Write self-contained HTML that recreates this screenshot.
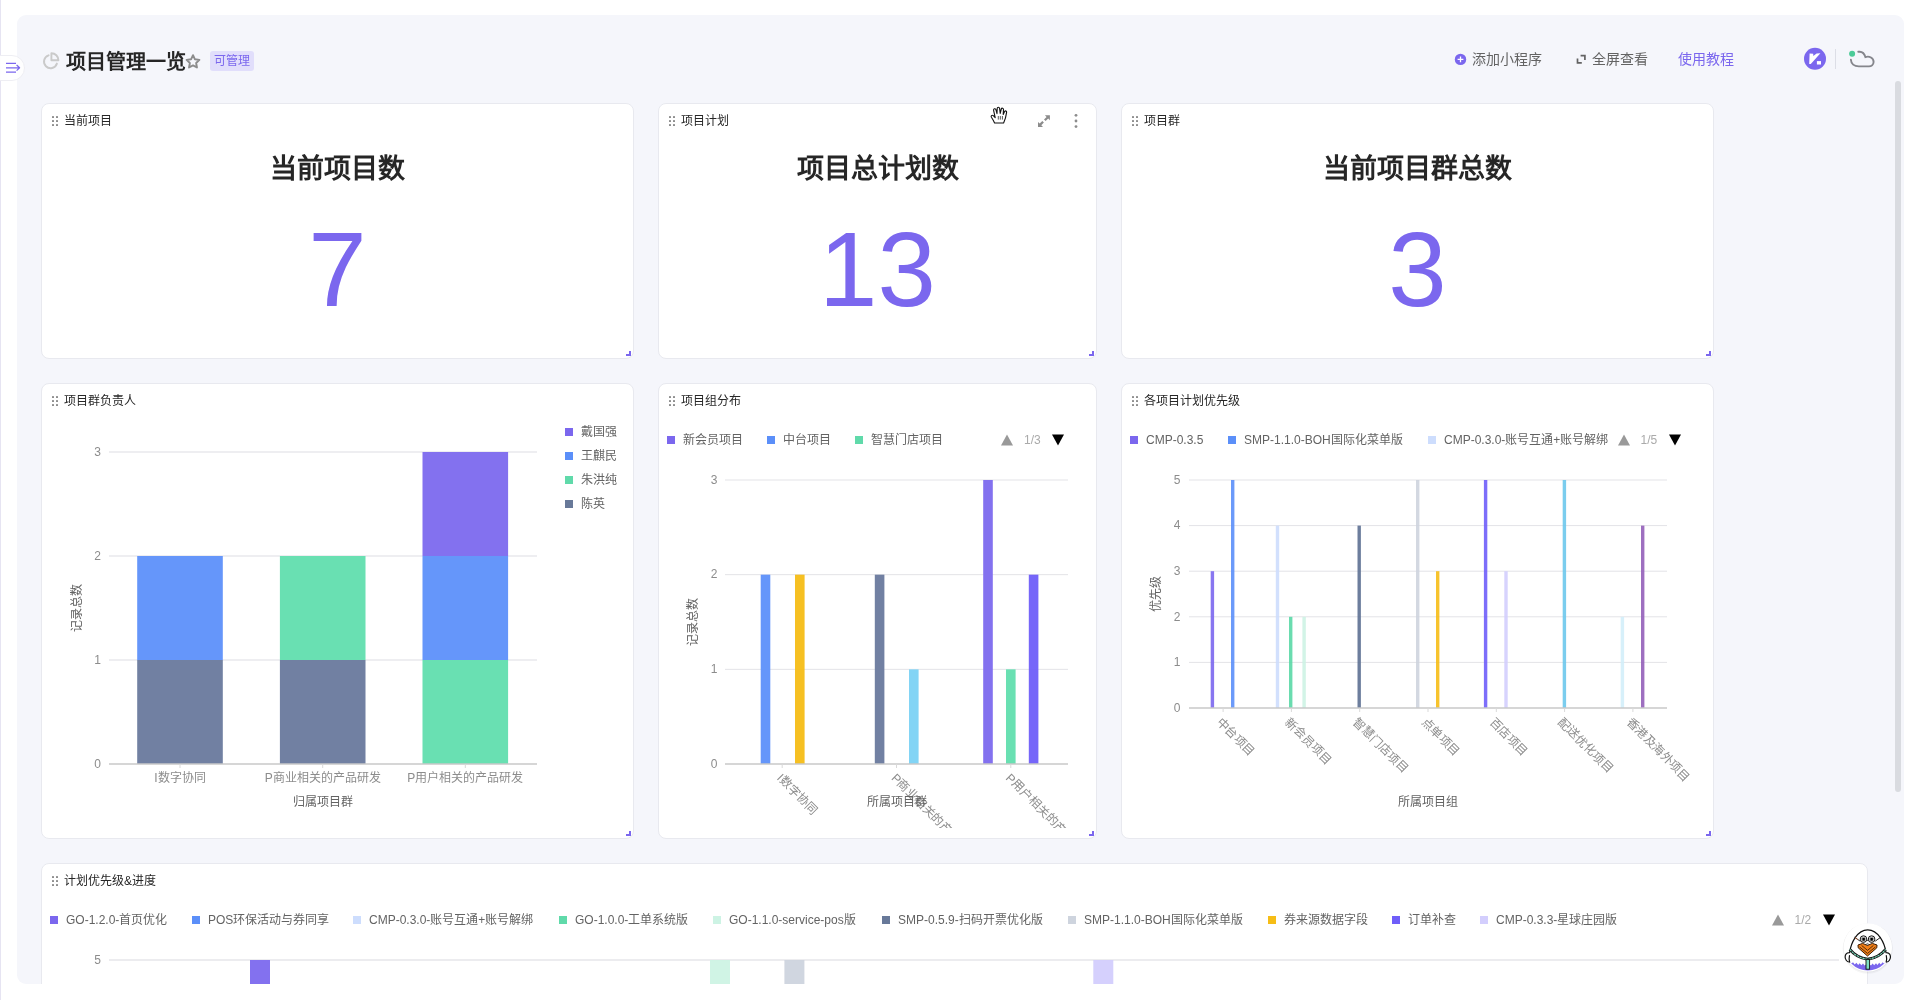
<!DOCTYPE html>
<html lang="zh-CN">
<head>
<meta charset="utf-8">
<title>项目管理一览</title>
<style>
*{box-sizing:border-box;margin:0;padding:0}
html,body{width:1920px;height:1000px;overflow:hidden;background:#fff;font-family:"Liberation Sans",sans-serif;color:#262626}
.abs{position:absolute}
#ov{will-change:opacity;opacity:.999}
.ct,.big,.htx{will-change:transform}
#strip{position:absolute;left:0;top:0;width:1px;height:1000px;background:#e6e4f2}
#main{position:absolute;left:17px;top:15px;width:1887px;height:969px;background:#f5f6fb;border-radius:9px;overflow:hidden}
#toggle{position:absolute;left:-6px;top:55px;width:30px;height:26px;border-radius:13px;background:#fff;box-shadow:0 1px 4px rgba(0,0,0,.10)}
.card{position:absolute;background:#fff;border:1px solid #e8e9ef;border-radius:8px;overflow:hidden}
.ct{position:absolute;left:22px;top:9px;font-size:12px;line-height:16px;color:#262626;white-space:nowrap}
.drag{position:absolute;left:10px;top:12px;width:7px;height:11px}
.rz{position:absolute;right:1px;bottom:1px;width:5px;height:5px;border-right:2px solid #7b67ee;border-bottom:2px solid #7b67ee}
.big{position:absolute;left:0;width:100%;text-align:center;white-space:nowrap}
.h1{top:45px;font-size:27px;line-height:40px;font-weight:bold;color:#262626}
.num{top:106px;font-size:105px;line-height:120px;color:#7b67ee}
svg text{font-family:"Liberation Sans",sans-serif}
.lg{position:absolute;font-size:12px;line-height:16px;color:#636363;white-space:nowrap}
.sq{position:absolute;width:8px;height:8px}
</style>
</head>
<body>
<div id="strip"></div>
<div id="main">
  <!-- header -->
  <div class="abs htx" style="left:49px;top:34px;font-size:20px;line-height:26px;font-weight:bold;color:#262626;white-space:nowrap">项目管理一览</div>
  <div class="abs" style="left:193px;top:36px;width:44px;height:20px;border-radius:3px;background:#e1defb"></div><div class="abs htx" style="left:193px;top:36px;width:44px;height:20px;color:#7b67ee;font-size:12px;line-height:20px;text-align:center">可管理</div>
  <div class="abs htx" style="left:1455px;top:35px;font-size:14px;line-height:18px;color:#636363;white-space:nowrap">添加小程序</div>
  <div class="abs htx" style="left:1575px;top:35px;font-size:14px;line-height:18px;color:#636363;white-space:nowrap">全屏查看</div>
  <div class="abs htx" style="left:1661px;top:35px;font-size:14px;line-height:18px;color:#7b67ee;white-space:nowrap">使用教程</div>

  <!-- row 1 -->
  <div class="card" style="left:24px;top:88px;width:593px;height:256px">
    <div class="ct">当前项目</div>
    <div class="big h1">当前项目数</div>
    <div class="big num">7</div>
  </div>
  <div class="card" style="left:641px;top:88px;width:439px;height:256px">
    <div class="ct">项目计划</div>
    <div class="big h1">项目总计划数</div>
    <div class="big num">13</div>
  </div>
  <div class="card" style="left:1104px;top:88px;width:593px;height:256px">
    <div class="ct">项目群</div>
    <div class="big h1">当前项目群总数</div>
    <div class="big num">3</div>
  </div>

  <!-- row 2 -->
  <div class="card" id="c4" style="left:24px;top:368px;width:593px;height:456px">
    <div class="ct">项目群负责人</div>
  </div>
  <div class="card" id="c5" style="left:641px;top:368px;width:439px;height:456px">
    <div class="ct">项目组分布</div>
  </div>
  <div class="card" id="c6" style="left:1104px;top:368px;width:593px;height:456px">
    <div class="ct">各项目计划优先级</div>
  </div>

  <!-- row 3 -->
  <div class="card" id="c7" style="left:24px;top:848px;width:1827px;height:300px">
    <div class="ct">计划优先级&amp;进度</div>
  </div>
</div>
<svg id="ov" style="position:absolute;left:0;top:0" width="1920" height="1000" viewBox="0 0 1920 1000">
<defs><clipPath id="mainclip"><rect x="17" y="15" width="1887" height="969" rx="9"/></clipPath></defs>
<g clip-path="url(#mainclip)">
<g id="ch1">
<line x1="109" y1="452" x2="537" y2="452" stroke="#e8e8ec" stroke-width="1.5"/>
<text x="101" y="456.3" font-size="12" text-anchor="end" fill="#8c8c8c" >3</text>
<line x1="109" y1="556" x2="537" y2="556" stroke="#e8e8ec" stroke-width="1.5"/>
<text x="101" y="560.3" font-size="12" text-anchor="end" fill="#8c8c8c" >2</text>
<line x1="109" y1="660" x2="537" y2="660" stroke="#e8e8ec" stroke-width="1.5"/>
<text x="101" y="664.3" font-size="12" text-anchor="end" fill="#8c8c8c" >1</text>
<text x="101" y="768.3" font-size="12" text-anchor="end" fill="#8c8c8c" >0</text>
<rect x="137.2" y="660" width="85.6" height="104" fill="#7180A2" fill-opacity="1"/>
<rect x="137.2" y="556" width="85.6" height="104" fill="#6596FA" fill-opacity="1"/>
<rect x="279.9" y="660" width="85.6" height="104" fill="#7180A2" fill-opacity="1"/>
<rect x="279.9" y="556" width="85.6" height="104" fill="#69E0B2" fill-opacity="1"/>
<rect x="422.5" y="660" width="85.6" height="104" fill="#69E0B2" fill-opacity="1"/>
<rect x="422.5" y="556" width="85.6" height="104" fill="#6596FA" fill-opacity="1"/>
<rect x="422.5" y="452" width="85.6" height="104" fill="#8371EF" fill-opacity="1"/>
<line x1="109" y1="764" x2="537" y2="764" stroke="#c9c9c9" stroke-width="1.5"/>
<line x1="180" y1="764" x2="180" y2="768" stroke="#d9d9d9" stroke-width="1"/>
<line x1="322.7" y1="764" x2="322.7" y2="768" stroke="#d9d9d9" stroke-width="1"/>
<line x1="465.3" y1="764" x2="465.3" y2="768" stroke="#d9d9d9" stroke-width="1"/>
<text x="180" y="782" font-size="12" text-anchor="middle" fill="#8c8c8c" >I数字协同</text>
<text x="322.7" y="782" font-size="12" text-anchor="middle" fill="#8c8c8c" >P商业相关的产品研发</text>
<text x="465.3" y="782" font-size="12" text-anchor="middle" fill="#8c8c8c" >P用户相关的产品研发</text>
<text x="322.5" y="806" font-size="12" text-anchor="middle" fill="#636363" >归属项目群</text>
<text transform="translate(80.5,608) rotate(-90)" font-size="12" text-anchor="middle" fill="#636363">记录总数</text>
<rect x="565" y="428" width="8" height="8" fill="#7B67EE"/>
<text x="581" y="435.7" font-size="12" text-anchor="start" fill="#636363" >戴国强</text>
<rect x="565" y="452" width="8" height="8" fill="#5B8FF9"/>
<text x="581" y="459.7" font-size="12" text-anchor="start" fill="#636363" >王麒民</text>
<rect x="565" y="476" width="8" height="8" fill="#60DAAA"/>
<text x="581" y="483.7" font-size="12" text-anchor="start" fill="#636363" >朱洪纯</text>
<rect x="565" y="500" width="8" height="8" fill="#687999"/>
<text x="581" y="507.7" font-size="12" text-anchor="start" fill="#636363" >陈英</text>
</g>
<defs><clipPath id="clip2"><rect x="659" y="384" width="437" height="444"/></clipPath><clipPath id="clip3"><rect x="1122" y="384" width="591" height="444"/></clipPath></defs>
<g id="ch2" clip-path="url(#clip2)">
<line x1="725" y1="480" x2="1068" y2="480" stroke="#e3e3e7" stroke-width="1"/>
<text x="717.5" y="484" font-size="12" text-anchor="end" fill="#8c8c8c" >3</text>
<line x1="725" y1="574.67" x2="1068" y2="574.67" stroke="#e3e3e7" stroke-width="1"/>
<text x="717.5" y="578" font-size="12" text-anchor="end" fill="#8c8c8c" >2</text>
<line x1="725" y1="669.33" x2="1068" y2="669.33" stroke="#e3e3e7" stroke-width="1"/>
<text x="717.5" y="673" font-size="12" text-anchor="end" fill="#8c8c8c" >1</text>
<text x="717.5" y="768.3" font-size="12" text-anchor="end" fill="#8c8c8c" >0</text>
<rect x="760.7" y="574.66" width="9.6" height="189.34" fill="#6596FA" fill-opacity="1"/>
<rect x="795" y="574.66" width="9.6" height="189.34" fill="#F6BD16" fill-opacity="0.95"/>
<rect x="874.8" y="574.66" width="9.6" height="189.34" fill="#7180A2" fill-opacity="1"/>
<rect x="909" y="669.33" width="9.6" height="94.67" fill="#82D4F5" fill-opacity="1"/>
<rect x="983.2" y="479.99" width="9.6" height="284.01" fill="#8371EF" fill-opacity="1"/>
<rect x="1006" y="669.33" width="9.6" height="94.67" fill="#69E0B2" fill-opacity="1"/>
<rect x="1028.8" y="574.66" width="9.6" height="189.34" fill="#6F5EF9" fill-opacity="0.95"/>
<line x1="725" y1="764" x2="1068" y2="764" stroke="#c9c9c9" stroke-width="1.5"/>
<line x1="782.2" y1="764" x2="782.2" y2="768" stroke="#d9d9d9" stroke-width="1"/>
<line x1="896.5" y1="764" x2="896.5" y2="768" stroke="#d9d9d9" stroke-width="1"/>
<line x1="1010.8" y1="764" x2="1010.8" y2="768" stroke="#d9d9d9" stroke-width="1"/>
<text transform="translate(779.2,776.0) rotate(45)" font-size="12" fill="#8c8c8c" dominant-baseline="central">I数字协同</text>
<text transform="translate(893.5,776.0) rotate(45)" font-size="12" fill="#8c8c8c" dominant-baseline="central">P商业相关的产品研发</text>
<text transform="translate(1007.8,776.0) rotate(45)" font-size="12" fill="#8c8c8c" dominant-baseline="central">P用户相关的产品研发</text>
<text x="896.5" y="806" font-size="12" text-anchor="middle" fill="#636363" >所属项目群</text>
<text transform="translate(697,622) rotate(-90)" font-size="12" text-anchor="middle" fill="#636363">记录总数</text>
<rect x="667" y="436" width="8" height="8" fill="#7B67EE"/>
<text x="683" y="443.6" font-size="12" text-anchor="start" fill="#636363" >新会员项目</text>
<rect x="767" y="436" width="8" height="8" fill="#5B8FF9"/>
<text x="783" y="443.6" font-size="12" text-anchor="start" fill="#636363" >中台项目</text>
<rect x="855" y="436" width="8" height="8" fill="#60DAAA"/>
<text x="871" y="443.6" font-size="12" text-anchor="start" fill="#636363" >智慧门店项目</text>
<path d="M1001,445.5 L1013,445.5 L1007,434.5 Z" fill="#999999"/>
<text x="1024" y="443.6" font-size="12" text-anchor="start" fill="#aaaaaa" >1/3</text>
<path d="M1052,434.5 L1064,434.5 L1058,445.5 Z" fill="#000"/>
</g>
<g id="ch3" clip-path="url(#clip3)">
<line x1="1189" y1="480.0" x2="1667" y2="480.0" stroke="#e3e3e7" stroke-width="1"/>
<text x="1180.5" y="483.7" font-size="12" text-anchor="end" fill="#8c8c8c" >5</text>
<line x1="1189" y1="525.6" x2="1667" y2="525.6" stroke="#e3e3e7" stroke-width="1"/>
<text x="1180.5" y="529.3000000000001" font-size="12" text-anchor="end" fill="#8c8c8c" >4</text>
<line x1="1189" y1="571.2" x2="1667" y2="571.2" stroke="#e3e3e7" stroke-width="1"/>
<text x="1180.5" y="574.9000000000001" font-size="12" text-anchor="end" fill="#8c8c8c" >3</text>
<line x1="1189" y1="616.8" x2="1667" y2="616.8" stroke="#e3e3e7" stroke-width="1"/>
<text x="1180.5" y="620.5" font-size="12" text-anchor="end" fill="#8c8c8c" >2</text>
<line x1="1189" y1="662.4" x2="1667" y2="662.4" stroke="#e3e3e7" stroke-width="1"/>
<text x="1180.5" y="666.1" font-size="12" text-anchor="end" fill="#8c8c8c" >1</text>
<text x="1180.5" y="711.7" font-size="12" text-anchor="end" fill="#8c8c8c" >0</text>
<rect x="1210.7" y="571.2" width="3.4" height="136.8" fill="#7B67EE" fill-opacity=".9"/>
<rect x="1231" y="480.0" width="3.4" height="228.0" fill="#5B8FF9" fill-opacity=".9"/>
<rect x="1275.8" y="525.6" width="3.4" height="182.4" fill="#CDDDFD" fill-opacity=".9"/>
<rect x="1289" y="616.8" width="3.4" height="91.2" fill="#5AD8A6" fill-opacity=".9"/>
<rect x="1302.4" y="616.8" width="3.4" height="91.2" fill="#CDF3E4" fill-opacity=".9"/>
<rect x="1357.5" y="525.6" width="3.4" height="182.4" fill="#5D7092" fill-opacity=".9"/>
<rect x="1416" y="480.0" width="3.4" height="228.0" fill="#CED4DE" fill-opacity=".9"/>
<rect x="1436" y="571.2" width="3.4" height="136.8" fill="#F6BD16" fill-opacity=".9"/>
<rect x="1483.9" y="480.0" width="3.4" height="228.0" fill="#6F5EF9" fill-opacity=".9"/>
<rect x="1504.3" y="571.2" width="3.4" height="136.8" fill="#D3CEFD" fill-opacity=".9"/>
<rect x="1562.7" y="480.0" width="3.4" height="228.0" fill="#6DC8EC" fill-opacity=".9"/>
<rect x="1620.7" y="616.8" width="3.4" height="91.2" fill="#D3EEF9" fill-opacity=".9"/>
<rect x="1641" y="525.6" width="3.4" height="182.4" fill="#945FB9" fill-opacity=".9"/>
<line x1="1189" y1="708" x2="1667" y2="708" stroke="#c9c9c9" stroke-width="1.5"/>
<line x1="1223.1" y1="708" x2="1223.1" y2="712" stroke="#d9d9d9" stroke-width="1"/>
<text transform="translate(1218.6,720) rotate(45)" font-size="12" fill="#8c8c8c" dominant-baseline="central">中台项目</text>
<line x1="1291.4" y1="708" x2="1291.4" y2="712" stroke="#d9d9d9" stroke-width="1"/>
<text transform="translate(1286.9,720) rotate(45)" font-size="12" fill="#8c8c8c" dominant-baseline="central">新会员项目</text>
<line x1="1359.7" y1="708" x2="1359.7" y2="712" stroke="#d9d9d9" stroke-width="1"/>
<text transform="translate(1355.2,720) rotate(45)" font-size="12" fill="#8c8c8c" dominant-baseline="central">智慧门店项目</text>
<line x1="1428.0" y1="708" x2="1428.0" y2="712" stroke="#d9d9d9" stroke-width="1"/>
<text transform="translate(1423.5,720) rotate(45)" font-size="12" fill="#8c8c8c" dominant-baseline="central">点单项目</text>
<line x1="1496.3" y1="708" x2="1496.3" y2="712" stroke="#d9d9d9" stroke-width="1"/>
<text transform="translate(1491.8,720) rotate(45)" font-size="12" fill="#8c8c8c" dominant-baseline="central">百店项目</text>
<line x1="1564.6" y1="708" x2="1564.6" y2="712" stroke="#d9d9d9" stroke-width="1"/>
<text transform="translate(1560.1,720) rotate(45)" font-size="12" fill="#8c8c8c" dominant-baseline="central">配送优化项目</text>
<line x1="1632.9" y1="708" x2="1632.9" y2="712" stroke="#d9d9d9" stroke-width="1"/>
<text transform="translate(1628.4,720) rotate(45)" font-size="12" fill="#8c8c8c" dominant-baseline="central">香港及海外项目</text>
<text x="1427.5" y="806" font-size="12" text-anchor="middle" fill="#636363" >所属项目组</text>
<text transform="translate(1160,594) rotate(-90)" font-size="12" text-anchor="middle" fill="#636363">优先级</text>
<rect x="1130" y="436" width="8" height="8" fill="#7B67EE"/>
<text x="1146" y="443.6" font-size="12" text-anchor="start" fill="#636363" >CMP-0.3.5</text>
<rect x="1228" y="436" width="8" height="8" fill="#5B8FF9"/>
<text x="1244" y="443.6" font-size="12" text-anchor="start" fill="#636363" >SMP-1.1.0-BOH国际化菜单版</text>
<rect x="1428" y="436" width="8" height="8" fill="#CDDDFD"/>
<text x="1444" y="443.6" font-size="12" text-anchor="start" fill="#636363" >CMP-0.3.0-账号互通+账号解绑</text>
<path d="M1618,445.5 L1630,445.5 L1624,434.5 Z" fill="#999999"/>
<text x="1640.5" y="443.6" font-size="12" text-anchor="start" fill="#aaaaaa" >1/5</text>
<path d="M1669,434.5 L1681,434.5 L1675,445.5 Z" fill="#000"/>
</g>
<g id="ch4">
<line x1="109" y1="960" x2="1839" y2="960" stroke="#e6e6ea" stroke-width="1.4"/>
<text x="101" y="964.3" font-size="12" text-anchor="end" fill="#8c8c8c" >5</text>
<rect x="250" y="960" width="20" height="40" fill="#8371EF" fill-opacity="1"/>
<rect x="710" y="960" width="20" height="40" fill="#CDF3E4" fill-opacity="0.95"/>
<rect x="784.4" y="960" width="20" height="40" fill="#CED4DE" fill-opacity="0.95"/>
<rect x="1093.3" y="960" width="20" height="40" fill="#D3CEFD" fill-opacity="0.95"/>
<rect x="50" y="916" width="8" height="8" fill="#7B67EE"/>
<text x="66" y="923.6" font-size="12" text-anchor="start" fill="#636363" >GO-1.2.0-首页优化</text>
<rect x="192" y="916" width="8" height="8" fill="#5B8FF9"/>
<text x="208" y="923.6" font-size="12" text-anchor="start" fill="#636363" >POS环保活动与券同享</text>
<rect x="353" y="916" width="8" height="8" fill="#CDDDFD"/>
<text x="369" y="923.6" font-size="12" text-anchor="start" fill="#636363" >CMP-0.3.0-账号互通+账号解绑</text>
<rect x="559" y="916" width="8" height="8" fill="#60DAAA"/>
<text x="575" y="923.6" font-size="12" text-anchor="start" fill="#636363" >GO-1.0.0-工单系统版</text>
<rect x="713" y="916" width="8" height="8" fill="#CDF3E4"/>
<text x="729" y="923.6" font-size="12" text-anchor="start" fill="#636363" >GO-1.1.0-service-pos版</text>
<rect x="882" y="916" width="8" height="8" fill="#687999"/>
<text x="898" y="923.6" font-size="12" text-anchor="start" fill="#636363" >SMP-0.5.9-扫码开票优化版</text>
<rect x="1068" y="916" width="8" height="8" fill="#CED4DE"/>
<text x="1084" y="923.6" font-size="12" text-anchor="start" fill="#636363" >SMP-1.1.0-BOH国际化菜单版</text>
<rect x="1268" y="916" width="8" height="8" fill="#F6BD16"/>
<text x="1284" y="923.6" font-size="12" text-anchor="start" fill="#636363" >券来源数据字段</text>
<rect x="1392" y="916" width="8" height="8" fill="#6F5EF9"/>
<text x="1408" y="923.6" font-size="12" text-anchor="start" fill="#636363" >订单补查</text>
<rect x="1480" y="916" width="8" height="8" fill="#D3CEFD"/>
<text x="1496" y="923.6" font-size="12" text-anchor="start" fill="#636363" >CMP-0.3.3-星球庄园版</text>
<path d="M1772,925.5 L1784,925.5 L1778,914.5 Z" fill="#999999"/>
<text x="1794.5" y="923.6" font-size="12" text-anchor="start" fill="#aaaaaa" >1/2</text>
<path d="M1823,914.5 L1835,914.5 L1829,925.5 Z" fill="#000"/>
</g>
</g>
<!-- header pie icon -->
<g fill="none" stroke="#cacaca" stroke-width="1.9" stroke-linecap="round" stroke-linejoin="round">
  <path d="M48.6,55.3 A6.6,6.6 0 1 0 56.9,63.6"/>
  <path d="M51.4,53.2 L51.4,60.2 L58.4,60.2 A7,7 0 0 0 51.4,53.2 Z"/>
</g>
<!-- star -->
<path d="M193,55.2 L194.95,59.3 L199.4,59.9 L196.15,63.0 L196.95,67.5 L193,65.35 L189.05,67.5 L189.85,63.0 L186.6,59.9 L191.05,59.3 Z" fill="none" stroke="#8c8c8c" stroke-width="1.9" stroke-linejoin="round"/>
<!-- add widget -->
<circle cx="1460.5" cy="59.4" r="5.7" fill="#7b67ee"/>
<path d="M1457.6,59.4 H1463.4 M1460.5,56.5 V62.3" stroke="#fff" stroke-width="1.3" fill="none"/>
<!-- fullscreen icon -->
<path d="M1580.6,55.6 H1584.9 V59.9 M1581.8,62.9 H1577.5 V58.6" fill="none" stroke="#636363" stroke-width="1.7"/>
<!-- vika logo -->
<circle cx="1815" cy="58.8" r="11" fill="#7b67ee"/>
<path d="M1809.6,53.5 L1813.2,53.7 L1813.3,55.9 L1816.6,53.5 L1820.4,53.3 L1810.8,64.1 L1809.2,64.1 Z" fill="#fff"/>
<rect x="1816.9" y="61.1" width="4.1" height="3.4" fill="#fff"/>
<line x1="1835.5" y1="49" x2="1835.5" y2="69" stroke="#dcdee6" stroke-width="1"/>
<!-- cloud -->
<path d="M1858.3,51.8 C1861.8,51.2 1864.4,53.4 1865.4,57.1 C1869.2,55.6 1873.7,58 1873.6,62 C1873.5,64.8 1871.2,66.4 1869,66.4 L1858.8,66.4 C1854.2,66.4 1851.1,63.6 1850.9,59.8" fill="none" stroke="#85868c" stroke-width="1.9" stroke-linecap="round"/>
<circle cx="1852.1" cy="53.7" r="3" fill="#4ccb98"/>
<!-- scrollbar -->
<rect x="1895" y="81" width="6" height="711" rx="3" fill="#d9dbe0"/>
<!-- drag handles -->
<defs>
  <g id="dd"><rect x="0" y="0" width="2" height="2" rx=".6"/><rect x="4" y="0" width="2" height="2" rx=".6"/><rect x="0" y="4" width="2" height="2" rx=".6"/><rect x="4" y="4" width="2" height="2" rx=".6"/><rect x="0" y="8" width="2" height="2" rx=".6"/><rect x="4" y="8" width="2" height="2" rx=".6"/></g>
</defs>
<use href="#dd" x="52" y="116" fill="#8c8c8c"/>
<use href="#dd" x="669" y="116" fill="#8c8c8c"/>
<use href="#dd" x="1132" y="116" fill="#8c8c8c"/>
<use href="#dd" x="52" y="396" fill="#8c8c8c"/>
<use href="#dd" x="669" y="396" fill="#8c8c8c"/>
<use href="#dd" x="1132" y="396" fill="#8c8c8c"/>
<use href="#dd" x="52" y="876" fill="#8c8c8c"/>
<!-- card 2 hover controls -->
<g fill="#8c8c8c">
  <circle cx="1076" cy="115.3" r="1.4"/><circle cx="1076" cy="121" r="1.4"/><circle cx="1076" cy="126.6" r="1.4"/>
  <path d="M1044.9,115.2 H1049.9 V120.2 L1048.2,118.5 L1045.6,121.1 L1044,119.5 L1046.6,116.9 Z"/>
  <path d="M1043,126.9 H1038 V121.9 L1039.7,123.6 L1042.3,121 L1043.9,122.6 L1041.3,125.2 Z"/>
</g>

<!-- resize handles -->
<g fill="none" stroke="#7b67ee" stroke-width="2">
<path d="M626,355 H630 V351"/>
<path d="M1089,355 H1093 V351"/>
<path d="M1706,355 H1710 V351"/>
<path d="M626,835 H630 V831"/>
<path d="M1089,835 H1093 V831"/>
<path d="M1706,835 H1710 V831"/>
</g>
<!-- hand cursor -->
<g>
<path d="M994.6,123 C993.6,120.8 992.3,118.5 991.4,117.2 C990.6,115.9 991.9,114.6 993.3,115.6 L995.2,117.6 L993.6,110.3 C993.3,108.6 995.3,108.2 995.9,109.6 L997,113.6 L997.2,108.4 C997.3,106.8 999.4,106.8 999.6,108.4 L1000.2,113.4 L1001.3,109 C1001.7,107.6 1003.6,108 1003.5,109.5 L1003.2,114.4 L1004.6,111.6 C1005.3,110.4 1006.9,111 1006.6,112.4 C1006.2,115.6 1005.2,119.5 1003.6,123 Z" fill="#fff" stroke="#111" stroke-width="1.1" stroke-linejoin="round"/>
<path d="M998.3,116 V119.6 M1000.3,116 V119.6 M1002.4,116 V119.6" stroke="#111" stroke-width="0.7" fill="none"/>
</g>
<!-- side toggle -->
<g>
<rect x="-13" y="55.5" width="37.5" height="25" rx="12.5" fill="#fff" stroke="#eeeef3" stroke-width="1"/>
<path d="M6,63.3 H16 M6,67.8 H19.2 M6,72.2 H16 M16.6,65 L19.6,67.8 L16.6,70.6" fill="none" stroke="#7b67ee" stroke-width="1.2" stroke-linejoin="round"/>
</g>
<!-- mascot -->
<g>
<circle cx="1867.8" cy="948.6" r="25.2" fill="#000" fill-opacity=".04"/>
<circle cx="1867.8" cy="948.0" r="24.7" fill="#000" fill-opacity=".04"/>
<circle cx="1867.8" cy="947.4" r="24.2" fill="#fff"/>
<clipPath id="mcl"><circle cx="1867.8" cy="947.4" r="23"/></clipPath>
<path d="M1849.6,961.6 L1851.6,963.4 L1853,962.2 L1854.8,964.4 L1856.4,962.8 L1858.2,965 L1859.6,963.2 L1861.4,965.2 L1863,963.6 L1864.6,965.4 L1866,964.6 L1869.6,964.6 L1871,965.4 L1872.6,963.6 L1874.2,965.2 L1876,963.2 L1877.4,965 L1879.2,962.8 L1880.8,964.4 L1882.6,962.2 L1884,963.4 L1886.3,961.6 L1890,975 L1846,975 Z" fill="#7b67ee" clip-path="url(#mcl)"/>
<path d="M1849.6,962 C1847,962.3 1844.6,959 1845.2,956 C1845.7,953.6 1848,952.4 1849.6,952.6 C1851,943 1857,930 1867.7,929.9 C1878.4,930 1884.6,943 1886,952.6 C1887.6,952.4 1890,953.6 1890.4,956 C1891,959 1888.6,962.3 1886.2,962" fill="#fff" stroke="#111" stroke-width="1.2" stroke-linejoin="round"/>
<path d="M1849.6,962 C1849,959.5 1849,957.5 1849.5,955.6 M1886.2,962 C1886.8,959.5 1886.8,957.5 1886.3,955.6" fill="none" stroke="#111" stroke-width="1.2" stroke-linecap="round"/>
<path d="M1849.8,949.4 C1854,954.6 1860,958.4 1867.7,959.2 C1875.4,958.4 1881.4,954.6 1885.6,949.4" fill="none" stroke="#111" stroke-width="2.9"/>
<path d="M1849.8,949.4 C1854,954.6 1860,958.4 1867.7,959.2 C1875.4,958.4 1881.4,954.6 1885.6,949.4" fill="none" stroke="#7fe0c2" stroke-width="1.1" stroke-dasharray="2.4 0.7"/>
<rect x="1866" y="959.4" width="3.6" height="9.8" fill="#7fe0c2" stroke="#111" stroke-width="0.9"/>
<path d="M1858,945 L1862.6,943.4 L1867.5,945.4 L1872.4,943.4 L1877,945 L1876.8,947.8 L1867.5,956 L1858.2,947.8 Z" fill="#f0801a" stroke="#3a1a02" stroke-width="1" stroke-linejoin="round"/>
<path d="M1859.6,947 L1867.5,953.4 L1875.4,947 M1861.6,945.4 L1867.5,950.4 L1873.4,945.4" fill="none" stroke="#4a2204" stroke-width="0.9"/>
<path d="M1854.6,937.2 L1860.2,941.2 M1880.8,937.2 L1875.2,941.2" stroke="#111" stroke-width="0.9" fill="none"/>
<path d="M1855,937.6 L1857.6,939.6" stroke="#e0662a" stroke-width="0.7" fill="none"/>
<circle cx="1863.5" cy="939.1" r="3.3" fill="#fff" stroke="#111" stroke-width="1"/>
<circle cx="1871.6" cy="939.1" r="3.3" fill="#fff" stroke="#111" stroke-width="1"/>
<circle cx="1863.5" cy="939.1" r="2.1" fill="none" stroke="#555" stroke-width="0.5"/>
<circle cx="1871.6" cy="939.1" r="2.1" fill="none" stroke="#555" stroke-width="0.5"/>
<rect x="1862.3" y="937.7" width="2.6" height="3" rx=".7" fill="#000"/>
<rect x="1870.3" y="937.7" width="2.6" height="3" rx=".7" fill="#000"/>
<path d="M1866.6,940.4 L1868.4,940.4" stroke="#111" stroke-width=".8"/>
<circle cx="1867.5" cy="944.2" r="0.9" fill="#fff" stroke="#111" stroke-width=".5"/>
</g>

</svg>

</body>
</html>
